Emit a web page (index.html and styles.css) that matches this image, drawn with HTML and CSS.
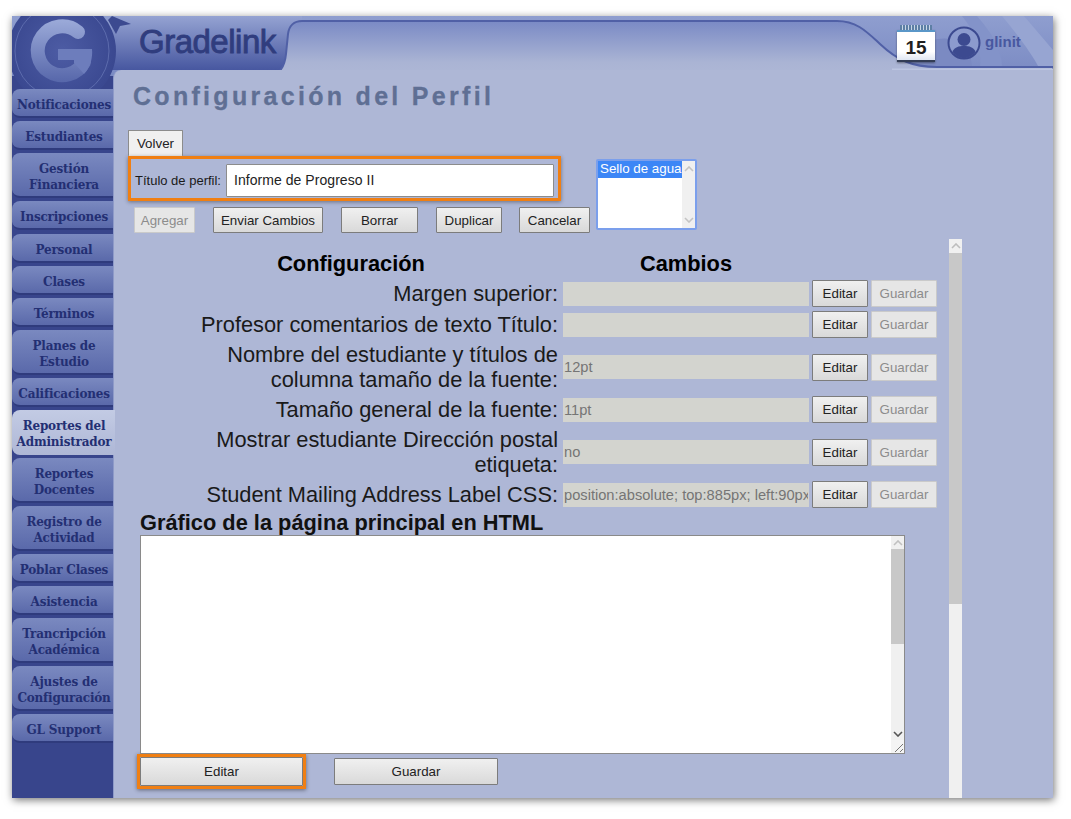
FILE: index.html
```html
<!DOCTYPE html>
<html lang="es">
<head>
<meta charset="utf-8">
<title>Configuración del Perfil</title>
<link rel="stylesheet" href="styles.css">
</head>
<body>
<div class="app">
  <svg class="header-art" viewBox="0 0 1041 110" width="1041" height="110" aria-hidden="true">
    <defs>
      <linearGradient id="darkFold" x1="0" y1="0" x2="0" y2="1"><stop offset="0" stop-color="#95a3d2"/><stop offset="1" stop-color="#4757a0"/></linearGradient>
      <linearGradient id="panelFill" x1="0" y1="0" x2="0" y2="1"><stop offset="0" stop-color="#7a8ac5"/><stop offset="0.75" stop-color="#aab4d4"/><stop offset="1" stop-color="#aeb7d6"/></linearGradient>
      <linearGradient id="gFill" gradientUnits="userSpaceOnUse" x1="0" y1="5" x2="0" y2="65"><stop offset="0" stop-color="#9aa9d8"/><stop offset="1" stop-color="#5868ab"/></linearGradient>
      <linearGradient id="topRight" x1="0" y1="0" x2="0" y2="1"><stop offset="0" stop-color="#8f9ecf"/><stop offset="1" stop-color="#7a8ac3"/></linearGradient>
      <radialGradient id="disc" cx="0.5" cy="0.5" r="0.5"><stop offset="0" stop-color="#4d5ca4"/><stop offset="1" stop-color="#3a4890"/></radialGradient>
    </defs>
    <rect width="1041" height="60" fill="url(#topRight)"/>
    <path d="M990 0 C1005 18 1020 38 1026 50 L1041 50 L1041 34 L1012 0Z" fill="#97a5d2"/>
    <path d="M950 0 C965 18 970 38 968 50 L990 50 C990 30 975 12 965 0Z" fill="#8393c9"/>
    <path d="M885 42 C905 25 945 10 958 38 L960 50 L925 50 C910 50 897 48 885 42Z" fill="#7b8ac2"/>
    <rect x="100" width="190" height="54" fill="url(#darkFold)"/>
    <path d="M290 5 L825 5 C845 5 855 16 868 28 C885 44 900 51 925 51 L1041 51 L1041 60 L258 60 C270 58 273 48 274 38 L276 18 C277 10 282 5 290 5Z" fill="url(#panelFill)" stroke="#5060a6" stroke-width="2"/>
    <rect x="880" y="52.5" width="161" height="1.5" fill="#bcc5e1"/>
    <circle cx="50" cy="35" r="54" fill="url(#disc)"/>
    <circle cx="50" cy="35" r="47" fill="none" stroke="#5c6bad" stroke-width="1"/>
    <path d="M100 0 L119 8 L108 10 L104 18 L96 4Z" fill="#3c4a90"/>
    <path d="M66 16 A24.5 24.5 0 1 0 72 46" fill="none" stroke="url(#gFill)" stroke-width="14" stroke-linecap="round"/>
    <path d="M46 33 H80 C81 42 78 52 72 58 L62 47 V44 H46Z" fill="#6d7dbc"/>
  </svg>
  <header class="topbar">
    <span class="brand">Gradelink</span>
    <div class="calendar">
      <span class="cal-rings"></span>
      <span class="cal-day">15</span>
    </div>
    <svg class="user-icon" viewBox="0 0 34 34" width="34" height="34" aria-hidden="true">
      <circle cx="17" cy="17" r="15.5" fill="#8c9bce" stroke="#3c4a90" stroke-width="2"/>
      <circle cx="17" cy="13.5" r="6.5" fill="#3c4a90"/>
      <path d="M5.5 26 C7 21 12 20 17 20 C22 20 27 21 28.5 26 C25 30.5 21 32 17 32 C13 32 9 30.5 5.5 26Z" fill="#3c4a90"/>
    </svg>
    <span class="username">glinit</span>
  </header>
  <div class="body-row">
    <nav class="sidebar">
      <a class="tab">Notificaciones</a>
      <a class="tab">Estudiantes</a>
      <a class="tab">Gestión<br>Financiera</a>
      <a class="tab">Inscripciones</a>
      <a class="tab tab-spaced">Personal</a>
      <a class="tab">Clases</a>
      <a class="tab">Términos</a>
      <a class="tab">Planes de<br>Estudio</a>
      <a class="tab">Calificaciones</a>
      <a class="tab tab-active">Reportes del<br>Administrador</a>
      <a class="tab">Reportes<br>Docentes</a>
      <a class="tab">Registro de<br>Actividad</a>
      <a class="tab">Poblar Clases</a>
      <a class="tab">Asistencia</a>
      <a class="tab">Trancripción<br>Académica</a>
      <a class="tab">Ajustes de<br>Configuración</a>
      <a class="tab">GL Support</a>
    </nav>
    <main class="main">
      <h1 class="page-title">Configuración del Perfil</h1>
      <div class="top-section">
        <div class="top-left">
          <button class="btn btn-back">Volver</button>
          <div class="title-box">
            <label class="title-label">Título de perfil:</label>
            <input class="title-input" type="text" value="Informe de Progreso II">
          </div>
          <div class="actions">
            <button class="btn btn-off w-agregar">Agregar</button>
            <button class="btn w-enviar">Enviar Cambios</button>
            <button class="btn w-borrar">Borrar</button>
            <button class="btn w-duplicar">Duplicar</button>
            <button class="btn w-cancelar">Cancelar</button>
          </div>
        </div>
        <div class="listbox">
          <div class="list-items"><div class="list-selected">Sello de agua</div></div>
          <div class="list-bar">
            <svg viewBox="0 0 10 6" width="10" height="6"><path d="M1 5 L5 1 L9 5" fill="none" stroke="#c4c4c4" stroke-width="1.6"/></svg>
            <svg viewBox="0 0 10 6" width="10" height="6"><path d="M1 1 L5 5 L9 1" fill="none" stroke="#c4c4c4" stroke-width="1.6"/></svg>
          </div>
        </div>
      </div>
      <div class="scroll-area">
        <div class="scroll-content">
          <div class="settings">
            <div class="col-head">Configuración</div>
            <div class="col-head col-head-wide">Cambios</div>

            <div class="set-label">Margen superior:</div>
            <input class="set-input" disabled>
            <button class="btn w-edit">Editar</button>
            <button class="btn btn-off w-save">Guardar</button>

            <div class="set-label">Profesor comentarios de texto Título:</div>
            <input class="set-input" disabled>
            <button class="btn w-edit">Editar</button>
            <button class="btn btn-off w-save">Guardar</button>

            <div class="set-label">Nombre del estudiante y títulos de<br>columna tamaño de la fuente:</div>
            <input class="set-input" disabled value="12pt">
            <button class="btn w-edit">Editar</button>
            <button class="btn btn-off w-save">Guardar</button>

            <div class="set-label">Tamaño general de la fuente:</div>
            <input class="set-input" disabled value="11pt">
            <button class="btn w-edit">Editar</button>
            <button class="btn btn-off w-save">Guardar</button>

            <div class="set-label">Mostrar estudiante Dirección postal<br>etiqueta:</div>
            <input class="set-input" disabled value="no">
            <button class="btn w-edit">Editar</button>
            <button class="btn btn-off w-save">Guardar</button>

            <div class="set-label">Student Mailing Address Label CSS:</div>
            <input class="set-input" disabled value="position:absolute; top:885px; left:90px;">
            <button class="btn w-edit">Editar</button>
            <button class="btn btn-off w-save">Guardar</button>
          </div>
          <h2 class="html-title">Gráfico de la página principal en HTML</h2>
          <div class="editor">
            <textarea class="editor-text"></textarea>
            <div class="editor-bar">
              <svg class="arrow" viewBox="0 0 10 6" width="10" height="6"><path d="M1 5 L5 1 L9 5" fill="none" stroke="#c0c0c0" stroke-width="1.6"/></svg>
              <div class="editor-thumb"></div>
              <svg class="arrow arrow-down" viewBox="0 0 10 6" width="10" height="6"><path d="M1 1 L5 5 L9 1" fill="none" stroke="#555" stroke-width="1.6"/></svg>
              <div class="grip"><svg viewBox="0 0 12 12" width="12" height="12"><path d="M3 11 L11 3 M8 11 L11 8" stroke="#777" stroke-width="1"/></svg></div>
            </div>
          </div>
          <div class="editor-actions">
            <div class="edit-highlight"><button class="btn w-wide">Editar</button></div>
            <button class="btn w-save-wide">Guardar</button>
          </div>
        </div>
        <div class="page-bar">
          <div class="page-arrow"><svg viewBox="0 0 10 6" width="10" height="6"><path d="M1 5 L5 1 L9 5" fill="none" stroke="#bdbdbd" stroke-width="1.6"/></svg></div>
          <div class="page-thumb"></div>
        </div>
      </div>
    </main>
  </div>
</div>
</body>
</html>
```
FILE: styles.css
```css
* { box-sizing: border-box; }
html, body { margin: 0; height: 100%; overflow: hidden; background: #fff; }
body { padding: 16px 18px 21px 12px; font-family: "Liberation Sans", Arial, sans-serif; color: #000; }

.app {
  position: relative;
  display: flex;
  flex-direction: column;
  width: 1041px;
  height: 782px;
  overflow: hidden;
  background: #38458c;
  box-shadow: 1px 2px 8px rgba(0, 0, 0, .55);
}
.header-art { position: absolute; left: 0; top: 0; }

.topbar {
  position: relative;
  display: flex;
  align-items: center;
  flex: none;
  height: 54px;
  padding-left: 127px;
}
.brand {
  font-size: 33px;
  letter-spacing: -.5px;
  color: #303d7e;
  -webkit-text-stroke: .9px #303d7e;
  margin-top: -2px;
}
.calendar {
  position: relative;
  display: flex;
  align-items: center;
  justify-content: center;
  width: 38px;
  height: 32px;
  margin: 6px 0 0 auto;
  padding-top: 3px;
  background: linear-gradient(#fff 70%, #dfe6f2);
  border-top: 2px solid #5a97c8;
  border-bottom: 2px solid #333d55;
  box-shadow: 0 1px 2px rgba(0, 0, 0, .4);
}
.cal-rings {
  position: absolute;
  left: 3px;
  right: 3px;
  top: -7px;
  height: 5px;
  background: repeating-linear-gradient(90deg, #5d7fa5 0 2px, #c8d6e6 2px 3px);
}
.cal-day { font-size: 19px; font-weight: bold; color: #1f1f1f; }
.user-icon { margin-left: 12px; flex: none; }
.username {
  width: 72px;
  flex: none;
  padding-left: 4px;
  font-size: 15px;
  font-weight: bold;
  color: #4858a0;
  margin-bottom: 3px;
}

.body-row { position: relative; display: flex; flex: 1; min-height: 0; }

.sidebar {
  display: flex;
  flex-direction: column;
  flex: none;
  width: 101px;
  padding-top: 19px;
  gap: 3px;
}
.tab {
  display: block;
  padding: 8px 0 3px 3px;
  font-family: "DejaVu Serif", serif;
  font-size: 12px;
  font-weight: bold;
  line-height: 16px;
  letter-spacing: -.2px;
  white-space: nowrap;
  text-align: center;
  color: #232f73;
  background: linear-gradient(#7a89c0, #5a69aa);
  border-bottom: 2px solid #2f3b7d;
  border-radius: 8px 0 0 8px;
}
.tab-spaced { margin-top: 1px; }
.tab-active {
  position: relative;
  width: 103px;
  padding: 8px 2px 5px 3px;
  background: linear-gradient(#c3cbe4, #aeb7d6);
  border-bottom: 0;
  z-index: 1;
}

.main {
  flex: 1;
  min-width: 0;
  padding: 12px 0 0 14px;
  background: #aeb7d6;
  border-left: 1px solid #8e9ac8;
  border-radius: 8px 0 0 0;
}
.page-title {
  margin: 0 0 20px 5px;
  font-size: 25px;
  line-height: 28px;
  font-weight: bold;
  letter-spacing: 3.3px;
  color: #5f6f94;
  -webkit-text-stroke: .3px #5f6f94;
}

.top-section { display: flex; align-items: flex-start; }
.top-left { display: flex; flex-direction: column; align-items: flex-start; width: 462px; }

.btn {
  padding: 0;
  font-family: "Liberation Sans", Arial, sans-serif;
  font-size: 13.333px;
  color: #222;
  background: linear-gradient(#f0f0f0, #d9d9d9);
  border: 1px solid #7c7c7c;
  border-radius: 1px;
  height: 26px;
}
.btn-off {
  color: #8c8c8c;
  background: #e6e6e6;
  border-color: #cacaca;
}
.btn-back { width: 55px; background: #f0f0f0; border-color: #8c8c8c; border-bottom: 0; }

.title-box {
  display: flex;
  align-items: center;
  gap: 5px;
  width: 433px;
  height: 45px;
  padding: 3px 4px 0;
  border: 3px solid #f07f13;
  box-shadow: 0 1px 4px rgba(0, 0, 0, .4);
}
.title-label { font-size: 13px; color: #1a1a1a; white-space: nowrap; }
.title-input {
  width: 328px;
  height: 33px;
  padding: 0 7px;
  font-family: "Liberation Sans", Arial, sans-serif;
  font-size: 14px;
  letter-spacing: .05px;
  color: #222;
  background: #fff;
  border: 1px solid #8c8c8c;
  border-radius: 1px;
}
.actions { display: flex; gap: 18px; margin: 6px 0 0 6px; }
.w-agregar { width: 61px; }
.w-enviar { width: 110px; }
.w-borrar { width: 77px; }
.w-duplicar { width: 66px; }
.w-cancelar { width: 71px; margin-left: -1px; }

.listbox {
  display: flex;
  width: 101px;
  height: 71px;
  margin: 29px 0 0 6px;
  background: #fff;
  border: 2px solid #7b9fec;
  border-radius: 2px;
}
.list-items { flex: 1; min-width: 0; }
.list-selected {
  height: 17px;
  width: 84px;
  padding-left: 2px;
  font-size: 13.333px;
  line-height: 16px;
  white-space: nowrap;
  color: #fff;
  background: #3c86f6;
}
.list-bar {
  display: flex;
  flex-direction: column;
  justify-content: space-between;
  align-items: center;
  flex: none;
  width: 13px;
  padding: 5px 0;
  background: #f0f0f0;
}

.scroll-area { display: flex; height: 559px; margin-top: 6px; overflow: hidden; }
.scroll-content { width: 821px; flex: none; padding-top: 12px; }

.settings {
  display: grid;
  grid-template-columns: 432px 246px 56px 66px;
  column-gap: 3px;
  row-gap: 4px;
  align-items: center;
}
.col-head {
  font-size: 21.8px;
  line-height: 25px;
  font-weight: bold;
  text-align: center;
  padding-left: 14px;
}
.col-head-wide { grid-column: 2 / span 3; padding: 0 128px 0 0; }
.set-label { padding-right: 2px; font-size: 21.8px; line-height: 25px; text-align: right; color: #1a1a1a; white-space: nowrap; }
.set-input {
  width: 246px;
  height: 24px;
  padding: 0 1px;
  font-family: "Liberation Sans", Arial, sans-serif;
  font-size: 14.667px;
  color: #757575;
  background: #d3d4cf;
  border: 0;
}
.w-edit { width: 56px; height: 27px; }
.w-save { width: 66px; height: 27px; }

.html-title {
  margin: 3px 0 0 12px;
  font-size: 21.8px;
  line-height: 24px;
  font-weight: bold;
  color: #111;
}
.editor { position: relative; width: 765px; height: 219px; margin-left: 12px; }
.editor-text {
  display: block;
  width: 100%;
  height: 100%;
  resize: none;
  overflow: hidden;
  background: #fff;
  border: 1px solid #8a8a8a;
  border-radius: 0;
}
.editor-bar {
  position: absolute;
  right: 1px;
  top: 1px;
  bottom: 1px;
  display: flex;
  flex-direction: column;
  align-items: center;
  width: 13px;
  background: #f0f0f0;
}
.arrow { flex: none; margin: 4px 0 3px; }
.arrow-down { margin-top: auto; margin-bottom: 3px; }
.editor-thumb { width: 13px; height: 95px; background: #c8c8c8; }
.grip { display: flex; justify-content: flex-end; align-items: flex-end; width: 13px; height: 13px; background: #f4f4f4; }

.editor-actions { display: flex; align-items: center; gap: 28px; margin-left: 9px; }
.edit-highlight {
  border: 3px solid #f07f13;
  box-shadow: 0 1px 4px rgba(0, 0, 0, .45);
}
.w-wide { display: block; width: 163px; height: 29px; }
.w-save-wide { width: 164px; height: 27px; }

.page-bar { flex: none; width: 13px; background: #f0f0f0; }
.page-arrow {
  display: flex;
  align-items: center;
  justify-content: center;
  height: 14px;
}
.page-thumb { height: 351px; background: #c8c8c8; }
```
